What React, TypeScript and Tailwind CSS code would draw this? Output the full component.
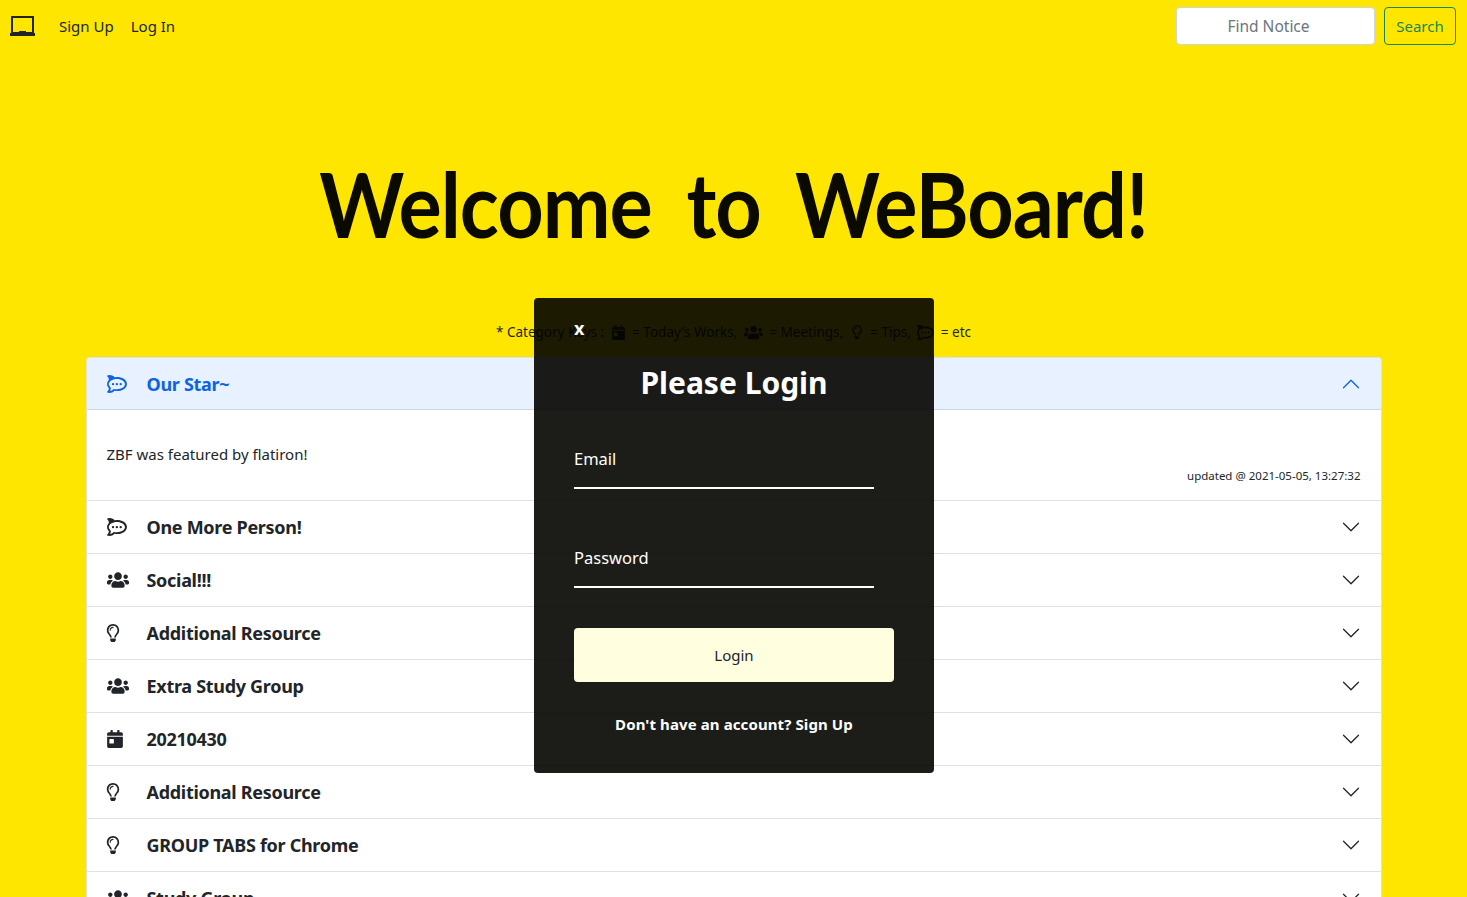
import { BsChevronDown, BsChevronUp } from "react-icons/bs";
import { FaCalendarDay, FaRegLightbulb, FaRocketchat, FaUsers } from "react-icons/fa";

type Kind = "chat" | "users" | "tip" | "day";

const rows: { title: string; kind: Kind }[] = [
    { title: "One More Person!", kind: "chat" },
    { title: "Social!!!", kind: "users" },
    { title: "Additional Resource", kind: "tip" },
    { title: "Extra Study Group", kind: "users" },
    { title: "20210430", kind: "day" },
    { title: "Additional Resource", kind: "tip" },
    { title: "GROUP TABS for Chrome", kind: "tip" },
    { title: "Study Group", kind: "users" },
];

function KindIcon({ kind }: { kind: Kind }) {
    if (kind === "chat") return <FaRocketchat size={20} />;
    if (kind === "users") return <FaUsers size={22} />;
    if (kind === "tip") return <FaRegLightbulb size={18} className="-ml-[3px]" />;
    return <FaCalendarDay size={18} className="-ml-[1px]" />;
}

function LaptopIcon() {
    return (
        <svg width="25" height="21" viewBox="0 0 25 21" fill="currentColor">
            <path d="M2 1h21v16H2z" fill="none" stroke="currentColor" strokeWidth="2" />
            <path d="M0 17h9v-2h7v2h9v3H0z" />
        </svg>
    );
}

function Row({ title, kind }: { title: string; kind: Kind }) {
    return (
        <div className="flex h-[53px] items-center border-t border-[#dee2e6] pr-5 pl-5 text-[#212529]">
            <span className="flex w-10 shrink-0 items-center">
                <KindIcon kind={kind} />
            </span>
            <span className="flex-1 text-[18px] font-bold tracking-[-0.3px]">{title}</span>
            <BsChevronDown size={20} />
        </div>
    );
}

export default function App() {
    return (
        <div className="relative h-[897px] overflow-hidden bg-[#ffe600] font-['Noto_Sans',sans-serif] text-[#212529]">
            <nav className="flex h-[52px] items-center pr-[11px] pl-[10px]">
                <LaptopIcon />
                <a className="ml-[24px] text-[15px]">Sign Up</a>
                <a className="ml-[17px] text-[15px]">Log In</a>
                <input
                    placeholder="Find Notice"
                    className="ml-auto h-[38px] w-[199px] rounded border border-[#ced4da] bg-white pr-[14px] text-center text-[15.5px] placeholder:text-[#6c757d]"
                />
                <button className="ml-[9px] h-[38px] w-[72px] rounded border border-[#198754] text-[15px] text-[#198754]">
                    Search
                </button>
            </nav>

            <h1 className="mt-[98px] text-center font-['Lato',sans-serif] text-[81px] leading-[108px] font-bold tracking-[-1px] text-[#0a0a00] [word-spacing:16px]">
                <span className="inline-block scale-y-110">Welcome to WeBoard!</span>
            </h1>

            <p className="mt-[62px] flex h-6 items-center justify-center gap-[3px] text-[13.5px] whitespace-pre text-[#212529]">
                * Category Keys : <FaCalendarDay size={15} /> = Today's Works, <FaUsers size={19} /> = Meetings,{" "}
                <FaRegLightbulb size={14} /> = Tips, <FaRocketchat size={17} /> = etc
            </p>

            <div className="mx-auto mt-[13px] w-[1296px] overflow-hidden rounded border border-[#dfdfdf] bg-white">
                <div className="flex h-[52px] items-center bg-[#e7f1ff] px-5 text-[#0c63e4] shadow-[inset_0_-1px_0_#cfd6e4]">
                    <span className="flex w-10 shrink-0 items-center">
                        <FaRocketchat size={20} />
                    </span>
                    <span className="flex-1 text-[18px] font-bold tracking-[-0.3px]">Our Star~</span>
                    <BsChevronUp size={20} />
                </div>
                <div className="flex h-[90px] justify-between px-5 pt-[33px]">
                    <span className="text-[15px]">ZBF was featured by flatiron!</span>
                    <span className="pt-[24px] text-[11.5px]">updated @ 2021-05-05, 13:27:32</span>
                </div>
                {rows.map((row, i) => (
                    <Row key={i} title={row.title} kind={row.kind} />
                ))}
            </div>

            {/* login modal */}
            <div className="absolute top-[298px] left-[534px] flex h-[475px] w-[400px] flex-col rounded bg-[rgba(3,3,0,0.9)] px-10 text-white">
                <button className="mt-[18px] self-start text-[18px] leading-6 font-bold">x</button>
                <h2 className="mt-[25px] text-center text-[30px] leading-9 font-bold">Please Login</h2>
                <input
                    placeholder="Email"
                    className="mt-[31px] h-[57px] w-[300px] border-b-2 border-white bg-transparent pb-[3px] text-[16.5px] placeholder:text-white"
                />
                <input
                    placeholder="Password"
                    className="mt-[42px] h-[57px] w-[300px] border-b-2 border-white bg-transparent pb-[3px] text-[16.5px] placeholder:text-white"
                />
                <button className="mt-[40px] h-[54px] w-[320px] rounded bg-[#ffffe0] text-[15px] text-[#212529]">
                    Login
                </button>
                <p className="mt-[30px] text-center text-[15px] leading-6 font-bold tracking-[0.1px]">
                    Don't have an account? Sign Up
                </p>
            </div>
        </div>
    );
}
